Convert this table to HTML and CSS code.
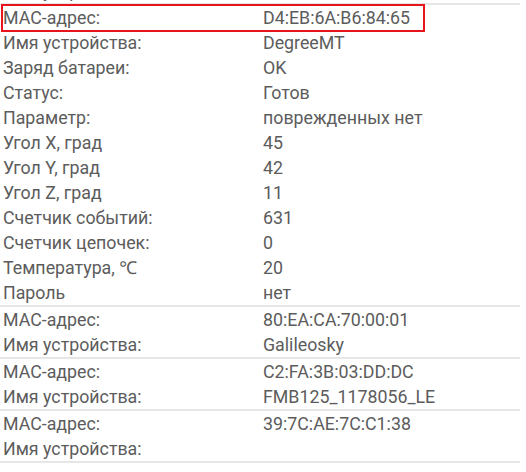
FILE: index.html
```html
<!DOCTYPE html>
<html lang="ru">
<head>
<meta charset="utf-8">
<link rel="stylesheet" href="styles.css">
</head>
<body>
<div class="list">
  <div class="device prev">
    <div class="row"><span class="k">Имя устройства:</span><span class="v"></span></div>
  </div>
  <div class="device">
    <div class="row hl"><span class="k">MAC-адрес:</span><span class="v">D4:EB:6A:B6:84:65</span></div>
    <div class="row"><span class="k">Имя устройства:</span><span class="v">DegreeMT</span></div>
    <div class="row"><span class="k">Заряд батареи:</span><span class="v">OK</span></div>
    <div class="row"><span class="k">Статус:</span><span class="v">Готов</span></div>
    <div class="row"><span class="k">Параметр:</span><span class="v">поврежденных нет</span></div>
    <div class="row"><span class="k">Угол X, град</span><span class="v">45</span></div>
    <div class="row"><span class="k">Угол Y, град</span><span class="v">42</span></div>
    <div class="row"><span class="k">Угол Z, град</span><span class="v">11</span></div>
    <div class="row"><span class="k">Счетчик событий:</span><span class="v">631</span></div>
    <div class="row"><span class="k">Счетчик цепочек:</span><span class="v">0</span></div>
    <div class="row"><span class="k">Температура, ℃</span><span class="v">20</span></div>
    <div class="row"><span class="k">Пароль</span><span class="v">нет</span></div>
  </div>
  <div class="device">
    <div class="row"><span class="k">MAC-адрес:</span><span class="v">80:EA:CA:70:00:01</span></div>
    <div class="row"><span class="k">Имя устройства:</span><span class="v">Galileosky</span></div>
  </div>
  <div class="device">
    <div class="row"><span class="k">MAC-адрес:</span><span class="v">C2:FA:3B:03:DD:DC</span></div>
    <div class="row"><span class="k">Имя устройства:</span><span class="v">FMB125_1178056_LE</span></div>
  </div>
  <div class="device">
    <div class="row"><span class="k">MAC-адрес:</span><span class="v">39:7C:AE:7C:C1:38</span></div>
    <div class="row"><span class="k">Имя устройства:</span><span class="v"></span></div>
  </div>
</div>
</body>
</html>
```
FILE: styles.css
```css
html, body {
  margin: 0;
  padding: 0;
  background: #ffffff;
}
body {
  width: 526px;
  height: 472px;
  overflow: hidden;
  font-family: Roboto, "Noto Sans", sans-serif;
  font-size: 17.8px;
  color: #5c5c5c;
}
.list {
  margin-top: -22px;
  width: 520px;
}
.device {
  border-bottom: 2px solid #e6e6e6;
}
.row {
  display: grid;
  grid-template-columns: 260px 1fr;
  height: 25px;
  line-height: 26px;
  padding-left: 3px;
  position: relative;
  white-space: nowrap;
}
.row.hl::after {
  content: "";
  position: absolute;
  left: 1px;
  top: -1px;
  width: 420px;
  height: 24px;
  border: 2px solid #e8141c;
  pointer-events: none;
}
```
